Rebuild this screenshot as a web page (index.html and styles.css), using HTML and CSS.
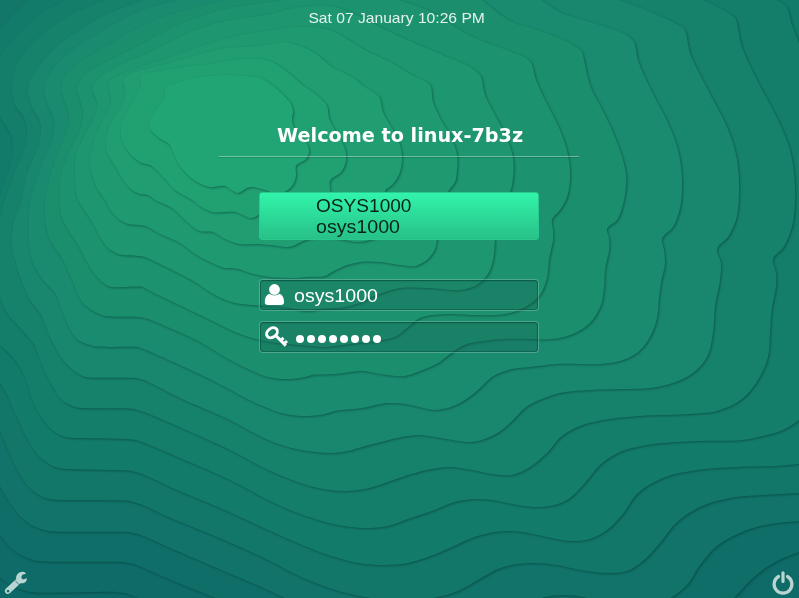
FILE: index.html
```html
<!DOCTYPE html>
<html lang="en">
<head>
<meta charset="utf-8">
<title>Welcome to linux-7b3z</title>
<link rel="stylesheet" href="styles.css">
</head>
<body>
<svg class="wallpaper" id="wallpaper" viewBox="0 0 799 598" aria-hidden="true"></svg>
<main class="screen">
  <header class="clock">Sat 07 January 10:26 PM</header>
  <section class="greeter">
    <h1 class="welcome"><span>Welcome to linux-7b3z</span></h1>
    <div class="user-list">
      <div class="user-name">OSYS1000</div>
      <div class="user-login">osys1000</div>
    </div>
    <div class="field">
      <svg class="field-icon" width="22" height="22" viewBox="0 0 22 22"><circle cx="10.500" cy="5.500" r="5.400"/><path d="M.8 17.500C.8 13.500 2.500 10.800 5.500 9.800Q10.500 13 15.500 9.800C18.300 10.800 20 13.500 20 17.500V18.300Q20 21 17 21H4Q.8 21 .8 18.300Z"/></svg>
      <span class="login-value">osys1000</span>
    </div>
    <div class="field">
      <svg class="field-icon key" width="26" height="24" viewBox="0 0 26 24"><ellipse cx="8" cy="7.800" rx="5.900" ry="4.400" transform="rotate(-38 8 7.800)"/><path d="M11.500 10.300L21.800 20.600M17 15.200L19.500 12.800M20.300 18.500L23 16"/></svg>
      <span class="dots"><i></i><i></i><i></i><i></i><i></i><i></i><i></i><i></i></span>
    </div>
  </section>
  <footer class="actions">
    <svg width="24" height="24" viewBox="0 0 24 24"><path fill-rule="evenodd" d="M23 2.700L19.300 3.700L18.200 6.400L19.800 8.600L24 7.200C23.800 10.500 21.300 13 17.500 12.200L7 22Q4.500 24 2.500 22Q.9 20 2.500 18L13.200 8C12.500 4 16 .5 20 .8Q22 1 23 2.700ZM5 18.800a1.300 1.300 0 1 0 .1 0Z"/><path class="wrench-cut" d="M12 9.500L16.500 14"/></svg>
    <svg class="power" width="24" height="24" viewBox="0 0 24 24"><path d="M7.500 5.500A8.900 8.900 0 1 0 16.500 5.500M12 1.800V10.500"/></svg>
  </footer>
</main>
<script src="wallpaper.js"></script>
</body>
</html>
```
FILE: styles.css
```css
* { box-sizing: border-box; }
body {
  margin: 0;
  height: 598px;
  overflow: hidden;
  background: #0d6967;
  color: #fff;
  font-family: "Liberation Sans", sans-serif;
}
.wallpaper {
  position: absolute;
  inset: 0;
  width: 799px;
  height: 598px;
}
.layer { filter: drop-shadow(1.300px 1.900px 1px rgba(0, 50, 45, .5)); }
.screen {
  position: relative;
  height: 598px;
  display: flex;
  flex-direction: column;
  align-items: center;
}
.clock {
  margin: 8px 6px 0 0;
  font-size: 15px;
  line-height: 20px;
  color: #e6f3ee;
  transform: scaleX(1.042);
}
.greeter {
  width: 360px;
  margin: 94px 0 0 -1px;
  display: flex;
  flex-direction: column;
  align-items: center;
}
.welcome {
  width: 360px;
  height: 35px;
  margin: 0 0 35px;
  padding-left: 2px;
  border-bottom: 1px solid rgba(255, 255, 255, .36);
  box-shadow: 0 1px 0 rgba(0, 50, 40, .2);
  font: bold 18.600px/28px "DejaVu Sans", sans-serif;
  text-align: center;
  white-space: nowrap;
}
.welcome span { display: inline-block; transform: scaleX(1.033); }
.user-list {
  width: 280px;
  height: 48px;
  margin-bottom: 39px;
  padding: 3px 0 0 56px;
  border: 1px solid #29c98f;
  border-radius: 3px;
  background: linear-gradient(#32f4aa, #27c187);
  color: #06241a;
  font-size: 18px;
  line-height: 21px;
}
.user-name { transform: scaleX(1.06); transform-origin: 0 0; }
.user-login, .login-value { transform: scaleX(1.09); transform-origin: 0 0; }
.field {
  width: 280px;
  height: 32px;
  margin-bottom: 10px;
  padding-left: 4px;
  display: flex;
  align-items: center;
  border: 1px solid rgba(150, 220, 195, .42);
  border-radius: 4px;
  background: rgba(22, 92, 85, .27);
  box-shadow: inset 0 0 0 1px rgba(0, 65, 52, .4), inset 0 1px 2px rgba(0, 65, 52, .4);
  font-size: 18px;
}
.field-icon { flex: none; fill: #fff; }
.key { fill: none; stroke: #fff; stroke-width: 3; }
.login-value { margin: 2px 0 0 8px; }
.dots { display: flex; gap: 3px; margin: 3px 0 0 6px; }
.dots i { width: 8px; height: 8px; border-radius: 50%; background: #fff; }
.actions {
  width: 100%;
  margin-top: auto;
  padding: 0 4px 3px 3px;
  display: flex;
  justify-content: space-between;
  fill: #b9d5d2;
}
.wrench-cut { stroke: #0d6967; stroke-width: .8; }
.power { fill: none; stroke: #b9d5d2; stroke-width: 3.200; stroke-linecap: round; }
```
FILE: wallpaper.js
```js
// Terraced contour layers, innermost first. Each is a closed ring of x,y points.
const rings = [
  "165,88 180,82 200,77 225,75 245,76 260,78 268,82 278,90 291,104 293,112 292,119 296,132 306,142 309,152 306,159 296,166 296,176 292,186 286,191 275,193 265,190 252,187 247,188 238,193 233,191 225,186 210,187 203,185 190,177 178,163 173,152 170,145 158,137 150,128 150,120 156,110 163,100 165,96",
  "140,77 150,73 165,70 190,66 215,63 230,60 262,59 272,62 285,70 304,86 318,96 327,106 329,118 338,135 345,149 346,160 342,171 330,181 330,192 328,202 315,210 290,210 260,214 255,217 250,218 243,215 236,212 212,212 203,208 192,200 175,190 164,178 150,165 142,163 130,154 122,140 121,125 127,112 138,92 141,84",
  "265,45 282,42 298,45 315,53 332,67 352,77 365,87 379,97 383,112 393,130 400,145 402,158 400,172 393,184 385,191 388,205 388,225 380,236 370,240 357,242 345,240 320,237 303,241 293,246 287,247 270,245 258,244 240,244 225,239 213,232 200,231 186,221 172,208 155,200 148,195 140,194 132,190 122,178 115,166 107,152 106,140 110,125 120,108 125,98 125,90 124,80 130,74 150,68 180,60 200,54 220,49 240,47",
  "265,31 295,27 315,27 335,32 352,42 365,50 392,63 412,75 430,85 433,102 440,118 450,135 457,155 457,170 455,182 448,192 447,205 443,220 437,240 435,249 428,259 415,266 400,265 380,262 360,262 342,267 332,272 325,276 306,277 298,278 270,277 250,273 238,269 225,268 210,262 195,254 180,243 160,234 145,226 128,224 120,220 112,212 105,200 98,190 92,175 90,160 93,145 100,125 108,112 111,100 109,90 109,82 120,75 140,67 170,57 200,46 220,40 240,35",
  "265,15 300,7 335,7 355,14 380,27 410,41 438,53 470,67 480,75 485,95 495,115 507,138 513,158 513,178 510,192 500,205 496,225 495,240 493,260 488,274 475,286 460,290 430,288 400,288 385,292 372,297 362,302 345,307 320,309 307,311 290,308 270,306 252,305 235,303 215,295 195,282 160,264 145,257 118,254 108,248 100,237 92,222 85,211 78,200 75,175 76,155 85,135 95,115 97,103 93,92 93,85 100,77 120,65 150,52 180,37 200,28 230,20",
  "270,2 330,-8 398,0 432,12 445,20 465,33 485,42 512,52 530,61 536,80 545,100 560,130 568,155 570,180 566,200 560,210 552,220 553,230 553,240 549,260 547,278 540,295 530,304 517,311 497,315 475,315 447,314 420,318 407,328 397,336 383,340 350,344 325,347 300,345 270,342 252,338 235,332 200,315 150,291 143,287 108,286 97,277 87,262 78,245 68,230 61,215 60,200 61,175 68,155 80,130 83,112 80,100 77,88 85,75 100,65 130,50 160,34 185,22 210,13 240,6",
  "235,-2 350,-30 480,-2 492,8 512,22 535,29 570,43 582,52 584,60 590,85 605,115 618,145 626,175 624,200 617,220 607,229 609,238 609,250 605,270 604,288 601,305 590,323 573,334 553,339 530,339 503,339 483,341 467,344 450,354 440,362 420,371 405,376 380,374 363,371 335,374 312,375 305,377 290,379 268,377 250,370 230,360 200,342 148,319 140,317 105,316 95,312 83,303 72,280 63,260 50,240 45,220 45,200 55,160 67,130 69,115 64,100 61,88 68,72 90,56 120,38 160,18 200,6",
  "185,-2 350,-50 540,-1 560,12 597,24 627,35 634,42 638,60 650,88 668,123 678,150 682,180 680,208 673,227 662,239 664,250 665,263 661,283 659,297 657,318 650,337 637,353 620,361 600,364 557,364 530,367 512,369 492,377 478,390 465,400 448,408 435,410 405,404 388,403 362,408 335,411 325,414 308,416 285,414 265,407 247,399 227,388 197,373 146,350 138,347 93,346 78,340 67,323 55,293 43,280 32,260 29,245 29,220 30,200 42,165 53,135 54,120 48,105 44,90 50,73 70,52 100,32 140,11",
  "148,-2 350,-70 617,-1 653,13 673,22 684,29 690,53 707,88 727,127 735,150 739,180 736,220 728,237 717,249 721,263 720,280 715,307 713,333 707,357 693,373 673,383 650,388 620,389 590,390 560,393 535,402 525,408 515,418 502,430 485,439 472,442 452,440 435,437 418,435 402,437 385,441 362,447 348,451 332,453 315,452 288,447 266,439 250,431 230,420 180,398 144,380 136,378 85,377 77,373 63,360 50,337 40,313 30,300 17,267 12,245 13,225 20,205 28,172 40,140 40,122 31,105 28,88 38,68 60,44 100,18",
  "110,-2 350,-90 702,-1 727,12 735,18 742,47 757,80 778,120 790,150 795,187 792,227 783,248 773,259 776,273 776,287 772,307 770,333 768,357 758,380 742,399 717,411 690,414 640,416 603,420 580,426 562,436 547,453 533,465 523,471 512,475 492,474 472,470 448,467 432,469 408,475 385,483 365,489 345,491 318,488 292,480 268,470 230,450 177,426 144,412 134,409 75,407 62,400 53,387 43,367 33,343 20,328 7,313 0,297 -5,270 -3,240 2,210 12,180 24,150 27,135 25,120 14,103 12,90 15,70 30,46 65,18",
  "68,-2 350,-110 777,0 786,6 792,25 799,43 830,120 850,200 835,270 830,350 820,400 799,420 783,430 763,436 743,440 697,441 647,445 620,452 600,465 585,483 567,500 550,506 533,507 512,504 492,500 475,499 455,502 432,511 408,519 388,526 365,528 338,525 312,518 285,508 268,500 230,480 187,461 147,444 136,440 75,438 65,437 52,430 40,415 32,400 25,378 15,360 0,345 -20,320 -20,240 0,195 10,165 13,145 10,133 0,117 -6,95 -2,62 30,22",
  "30,-2 350,-130 830,-10 900,200 850,460 799,464 777,466 737,467 697,470 663,478 638,493 622,515 607,530 590,539 570,541 547,537 528,533 512,531 495,532 472,538 452,547 428,557 408,563 385,565 358,563 328,555 295,542 268,530 220,508 177,490 142,474 132,471 65,469 55,467 40,457 28,440 18,420 9,399 0,383 -30,350 -30,100 0,30",
  "-5,-5 350,-150 850,-20 920,200 850,490 799,493 763,495 730,498 700,507 677,522 660,543 643,561 627,571 607,573 580,570 557,565 533,563 518,564 498,569 478,580 458,591 438,597 400,601 365,597 332,589 295,574 268,560 217,537 173,519 140,504 130,501 60,500 45,498 32,490 20,475 8,450 0,431 -40,380 -40,100",
  "-60,-60 350,-170 870,-30 940,200 850,515 799,521 770,524 740,533 717,546 700,565 687,585 672,597 640,606 605,603 583,597 563,595 545,597 500,615 400,630 300,605 268,590 233,575 177,551 138,534 128,532 48,531 35,527 22,518 10,503 0,486 -50,420",
  "-80,-80 350,-190 890,-40 960,200 850,535 799,552 777,561 753,578 735,597 700,630 400,660 213,597 150,571 134,564 124,562 38,561 25,557 10,547 0,535 -60,480",
  "-100,-100 350,-200 910,-60 960,600 800,640 400,660 160,607 140,599 128,594 115,592 30,592 12,586 0,578 -70,530"
];

const fills = ["#22a574", "#21a172", "#209e72", "#1f9a70", "#1e9670", "#1c926e", "#1b8f6d", "#1a8b6f", "#19876e", "#17826c", "#157e6b", "#137b6a", "#127769", "#117369", "#0f6f68", "#0e6b67"];

const dist = (p, q) => Math.hypot(q[0] - p[0], q[1] - p[1]);

// Tangent at b, per unit of length, from its neighbours a and c.
function tangent(a, b, c) {
  const d1 = dist(a, b), d2 = dist(b, c);
  return [0, 1].map(k =>
    ((b[k] - a[k]) / d1 * d2 + (c[k] - b[k]) / d2 * d1) / (d1 + d2));
}

// Closed spline through the points, written as cubic segments.
// Handles are kept short beside a short neighbour so long runs stay flat.
function smooth(points) {
  const n = points.length;
  const at = i => points[(i + n) % n];
  let d = `M${at(0)}`;
  for (let i = 0; i < n; i++) {
    const [a, b, c, e] = [at(i - 1), at(i), at(i + 1), at(i + 2)];
    const len = dist(b, c);
    const rb = Math.min(len, 1.3 * dist(a, b)) / 3;
    const rc = Math.min(len, 1.3 * dist(c, e)) / 3;
    const tb = tangent(a, b, c), tc = tangent(b, c, e);
    const p = [0, 1].map(k => b[k] + tb[k] * rb);
    const q = [0, 1].map(k => c[k] - tc[k] * rc);
    d += `C${p} ${q} ${c}`;
  }
  return d + "Z";
}

const wallpaper = document.getElementById("wallpaper");
for (let i = rings.length - 1; i >= 0; i--) {
  const path = document.createElementNS("http://www.w3.org/2000/svg", "path");
  path.setAttribute("class", "layer");
  path.setAttribute("fill", fills[i]);
  path.setAttribute("d", smooth(rings[i].split(" ").map(p => p.split(",").map(Number))));
  wallpaper.append(path);
}
```
